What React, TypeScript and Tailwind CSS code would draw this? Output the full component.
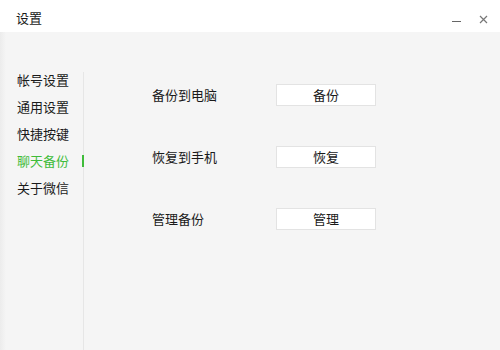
import React from "react";

const font = { fontFamily: '"Microsoft YaHei", "Noto Sans CJK SC", sans-serif' };

export default function App() {
  const items = ["帐号设置", "通用设置", "快捷按键", "聊天备份", "关于微信"];
  const rows = [
    ["备份到电脑", "备份"],
    ["恢复到手机", "恢复"],
    ["管理备份", "管理"],
  ];
  return (
    <div className="w-[500px] h-[350px] overflow-hidden flex flex-col bg-white text-[#1a1a1a]" style={font}>
      <div className="h-[32px] bg-white flex items-center justify-between pl-[16px] pr-[12px] shrink-0">
        <span className="text-[13px] mt-[4px]">设置</span>
        <div className="flex items-center gap-[16px] mt-[6px] text-[#555]">
          <div className="w-[9px] h-[1px] bg-[#666] mt-[4px]" />
          <svg width="9" height="9" viewBox="0 0 9 9" className="ml-[2px]">
            <path d="M1 1 L8 8 M8 1 L1 8" stroke="#777" strokeWidth="1.2" />
          </svg>
        </div>
      </div>
      <div className="flex-1 flex bg-[#f5f5f5] relative">
        <div className="absolute left-0 top-0 bottom-0 w-[6px] bg-gradient-to-r from-[#ececec] to-[#f5f5f5]" />
        <div className="w-[84px] shrink-0 pt-[40px] flex">
          <div className="flex-1">
            <div className="pl-[17px]">
              {items.map((t, i) => (
                <div
                  key={t}
                  className={`h-[27px] leading-[27px] text-[13px] ${i === 3 ? "text-[#3fbc3a]" : "text-[#1a1a1a]"}`}
                  style={i === 0 ? { marginTop: -6 } : undefined}
                >
                  {t}
                </div>
              ))}
            </div>
          </div>
          <div className="w-[2px] relative border-r border-[#e6e6e6]">
            <div className="absolute right-[-1px] top-[83px] w-[2px] h-[12px] bg-[#3fbc3a]" />
          </div>
        </div>
        <div className="flex-1 flex flex-col pt-[52px] pl-[68px] gap-[40px]">
          {rows.map(([l, b]) => (
            <div key={l} className="flex items-center h-[22px]">
              <div className="w-[124px] text-[13px]">{l}</div>
              <button className="w-[100px] h-[22px] bg-white border border-[#e3e3e3] text-[13px] text-[#1a1a1a] flex items-center justify-center">
                {b}
              </button>
            </div>
          ))}
        </div>
      </div>
    </div>
  );
}
